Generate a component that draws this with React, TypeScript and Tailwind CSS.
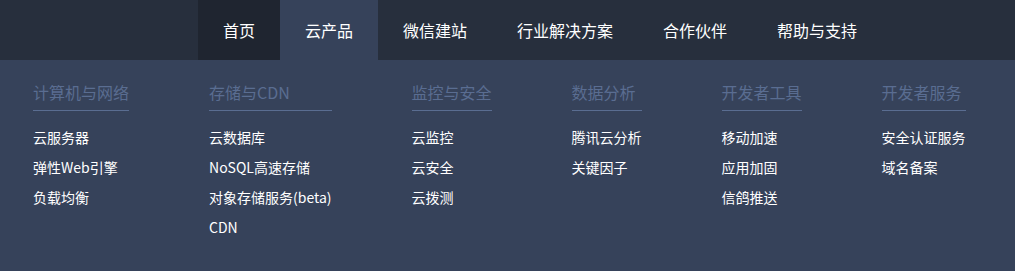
const navItems = ['首页', '云产品', '微信建站', '行业解决方案', '合作伙伴', '帮助与支持']

const columns = [
  { title: '计算机与网络', items: ['云服务器', '弹性Web引擎', '负载均衡'] },
  { title: '存储与CDN', items: ['云数据库', 'NoSQL高速存储', '对象存储服务(beta)', 'CDN'] },
  { title: '监控与安全', items: ['云监控', '云安全', '云拨测'] },
  { title: '数据分析', items: ['腾讯云分析', '关键因子'] },
  { title: '开发者工具', items: ['移动加速', '应用加固', '信鸽推送'] },
  { title: '开发者服务', items: ['安全认证服务', '域名备案'] },
]

export default function App() {
  return (
    <div className="w-[1015px] h-[271px] flex flex-col" style={{ fontFamily: '"Noto Sans CJK SC", "Noto Sans", sans-serif' }}>
      {/* 顶部导航 */}
      <div className="h-[60px] bg-[#272f3d] flex pl-[198px] shrink-0">
        {navItems.map((n, i) => (
          <div
            key={n}
            className={`px-[25px] h-full flex items-center text-[16px] text-white ${i === 0 ? 'bg-[#1f2530]' : i === 1 ? 'bg-[#36425a]' : ''}`}
          >
            {n}
          </div>
        ))}
      </div>

      {/* 下拉面板 */}
      <div className="flex-1 bg-[#36425a] flex items-start gap-[80px] pl-[33px] pt-[20px]">
        {columns.map(c => (
          <div key={c.title} className="flex flex-col">
            <div className="text-[16px] leading-[24px] text-[#5a6d91] pb-[6px] border-b border-[#5a6d91] whitespace-nowrap">
              {c.title}
            </div>
            <ul className="mt-[11px]">
              {c.items.map(it => (
                <li key={it} className="text-[14px] leading-[30px] text-white whitespace-nowrap">{it}</li>
              ))}
            </ul>
          </div>
        ))}
      </div>
    </div>
  )
}
